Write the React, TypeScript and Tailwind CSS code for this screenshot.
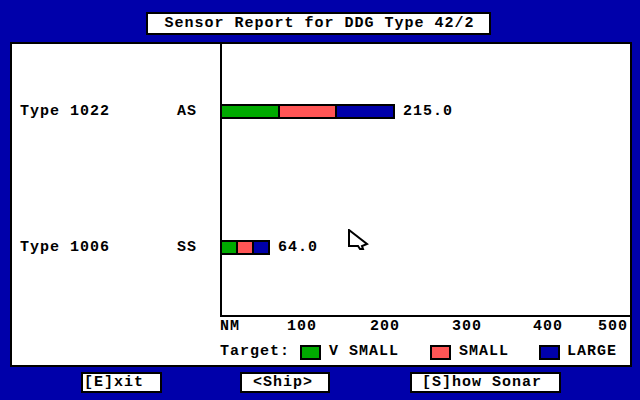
import React from "react";

const F = "font-['Liberation_Mono','DejaVu_Sans_Mono',monospace] font-bold text-[15px] leading-[15px] tracking-[1px] text-black";

function Bar({ w, value }: { w: string; value: string }) {
  return (
    <div className="flex h-[15px] items-center">
      <div className={`flex h-[15px] ${w} gap-[2px] border-y-2 border-r-2 border-black bg-black`}>
        <div className="flex-1 bg-[#00aa00]" />
        <div className="flex-1 bg-[#ff5555]" />
        <div className="flex-1 bg-[#0000aa]" />
      </div>
      <span className="ml-[8px] whitespace-pre">{value}</span>
    </div>
  );
}

function Label({ name, kind }: { name: string; kind: string }) {
  return (
    <div className="flex h-[15px] items-center">
      <span className="w-[157px] whitespace-pre">{name}</span>
      <span className="whitespace-pre">{kind}</span>
    </div>
  );
}

function Swatch({ c }: { c: string }) {
  return <div className={`mt-[1px] h-[15px] w-[21px] border-2 border-black ${c}`} />;
}

export default function App() {
  return (
    <div className={`relative h-[400px] w-[640px] overflow-hidden bg-[#0000aa] pt-[12px] ${F}`}>
      <div className="ml-[146px] flex h-[23px] w-[345px] items-center justify-center border-2 border-black bg-white pl-[2px]">
        <span className="whitespace-pre">Sensor Report for DDG Type 42/2</span>
      </div>

      <div className="ml-[10px] mt-[7px] flex h-[325px] w-[622px] flex-col border-2 border-black bg-white">
        <div className="flex h-[273px]">
          <div className="flex w-[208px] flex-col pl-[8px] pt-[60px]">
            <Label name="Type 1022" kind="AS" />
            <div className="mt-[121px]">
              <Label name="Type 1006" kind="SS" />
            </div>
          </div>
          <div className="flex flex-1 flex-col border-b-2 border-l-2 border-black pt-[60px]">
            <Bar w="w-[173px]" value="215.0" />
            <div className="mt-[121px]">
              <Bar w="w-[48px]" value="64.0" />
            </div>
          </div>
        </div>

        <div className="relative ml-[208px] mt-[2px] h-[15px]">
          <span className="absolute left-0 top-0">NM</span>
          <span className="absolute left-[67px] top-0">100</span>
          <span className="absolute left-[150px] top-0">200</span>
          <span className="absolute left-[232px] top-0">300</span>
          <span className="absolute left-[313px] top-0">400</span>
          <span className="absolute left-[378px] top-0">500</span>
        </div>

        <div className="ml-[208px] mt-[10px] flex items-start">
          <span className="whitespace-pre">Target:</span>
          <div className="ml-[10px]"><Swatch c="bg-[#00aa00]" /></div>
          <span className="ml-[8px] whitespace-pre">V SMALL</span>
          <div className="ml-[31px]"><Swatch c="bg-[#ff5555]" /></div>
          <span className="ml-[8px] whitespace-pre">SMALL</span>
          <div className="ml-[30px]"><Swatch c="bg-[#0000aa]" /></div>
          <span className="ml-[7px] whitespace-pre">LARGE</span>
        </div>
      </div>

      <div className="mt-[5px] flex">
        <div className="ml-[81px] flex h-[21px] w-[81px] items-center border-2 border-black bg-white pl-[1px]">
          <span className="whitespace-pre">[E]xit</span>
        </div>
        <div className="ml-[78px] flex h-[21px] w-[90px] items-center border-2 border-black bg-white pl-[11px]">
          <span className="whitespace-pre">&lt;Ship&gt;</span>
        </div>
        <div className="ml-[80px] flex h-[21px] w-[151px] items-center border-2 border-black bg-white pl-[10px]">
          <span className="whitespace-pre">[S]how Sonar</span>
        </div>
      </div>

      <svg className="absolute left-[348px] top-[229px]" width="21" height="22" viewBox="0 0 21 22">
        <path d="M1 1 L1 17 L10 17 L12 20 L15 20 L14 17 L19 15 Z" fill="white" stroke="black" strokeWidth="2" strokeLinejoin="miter" />
      </svg>
    </div>
  );
}
